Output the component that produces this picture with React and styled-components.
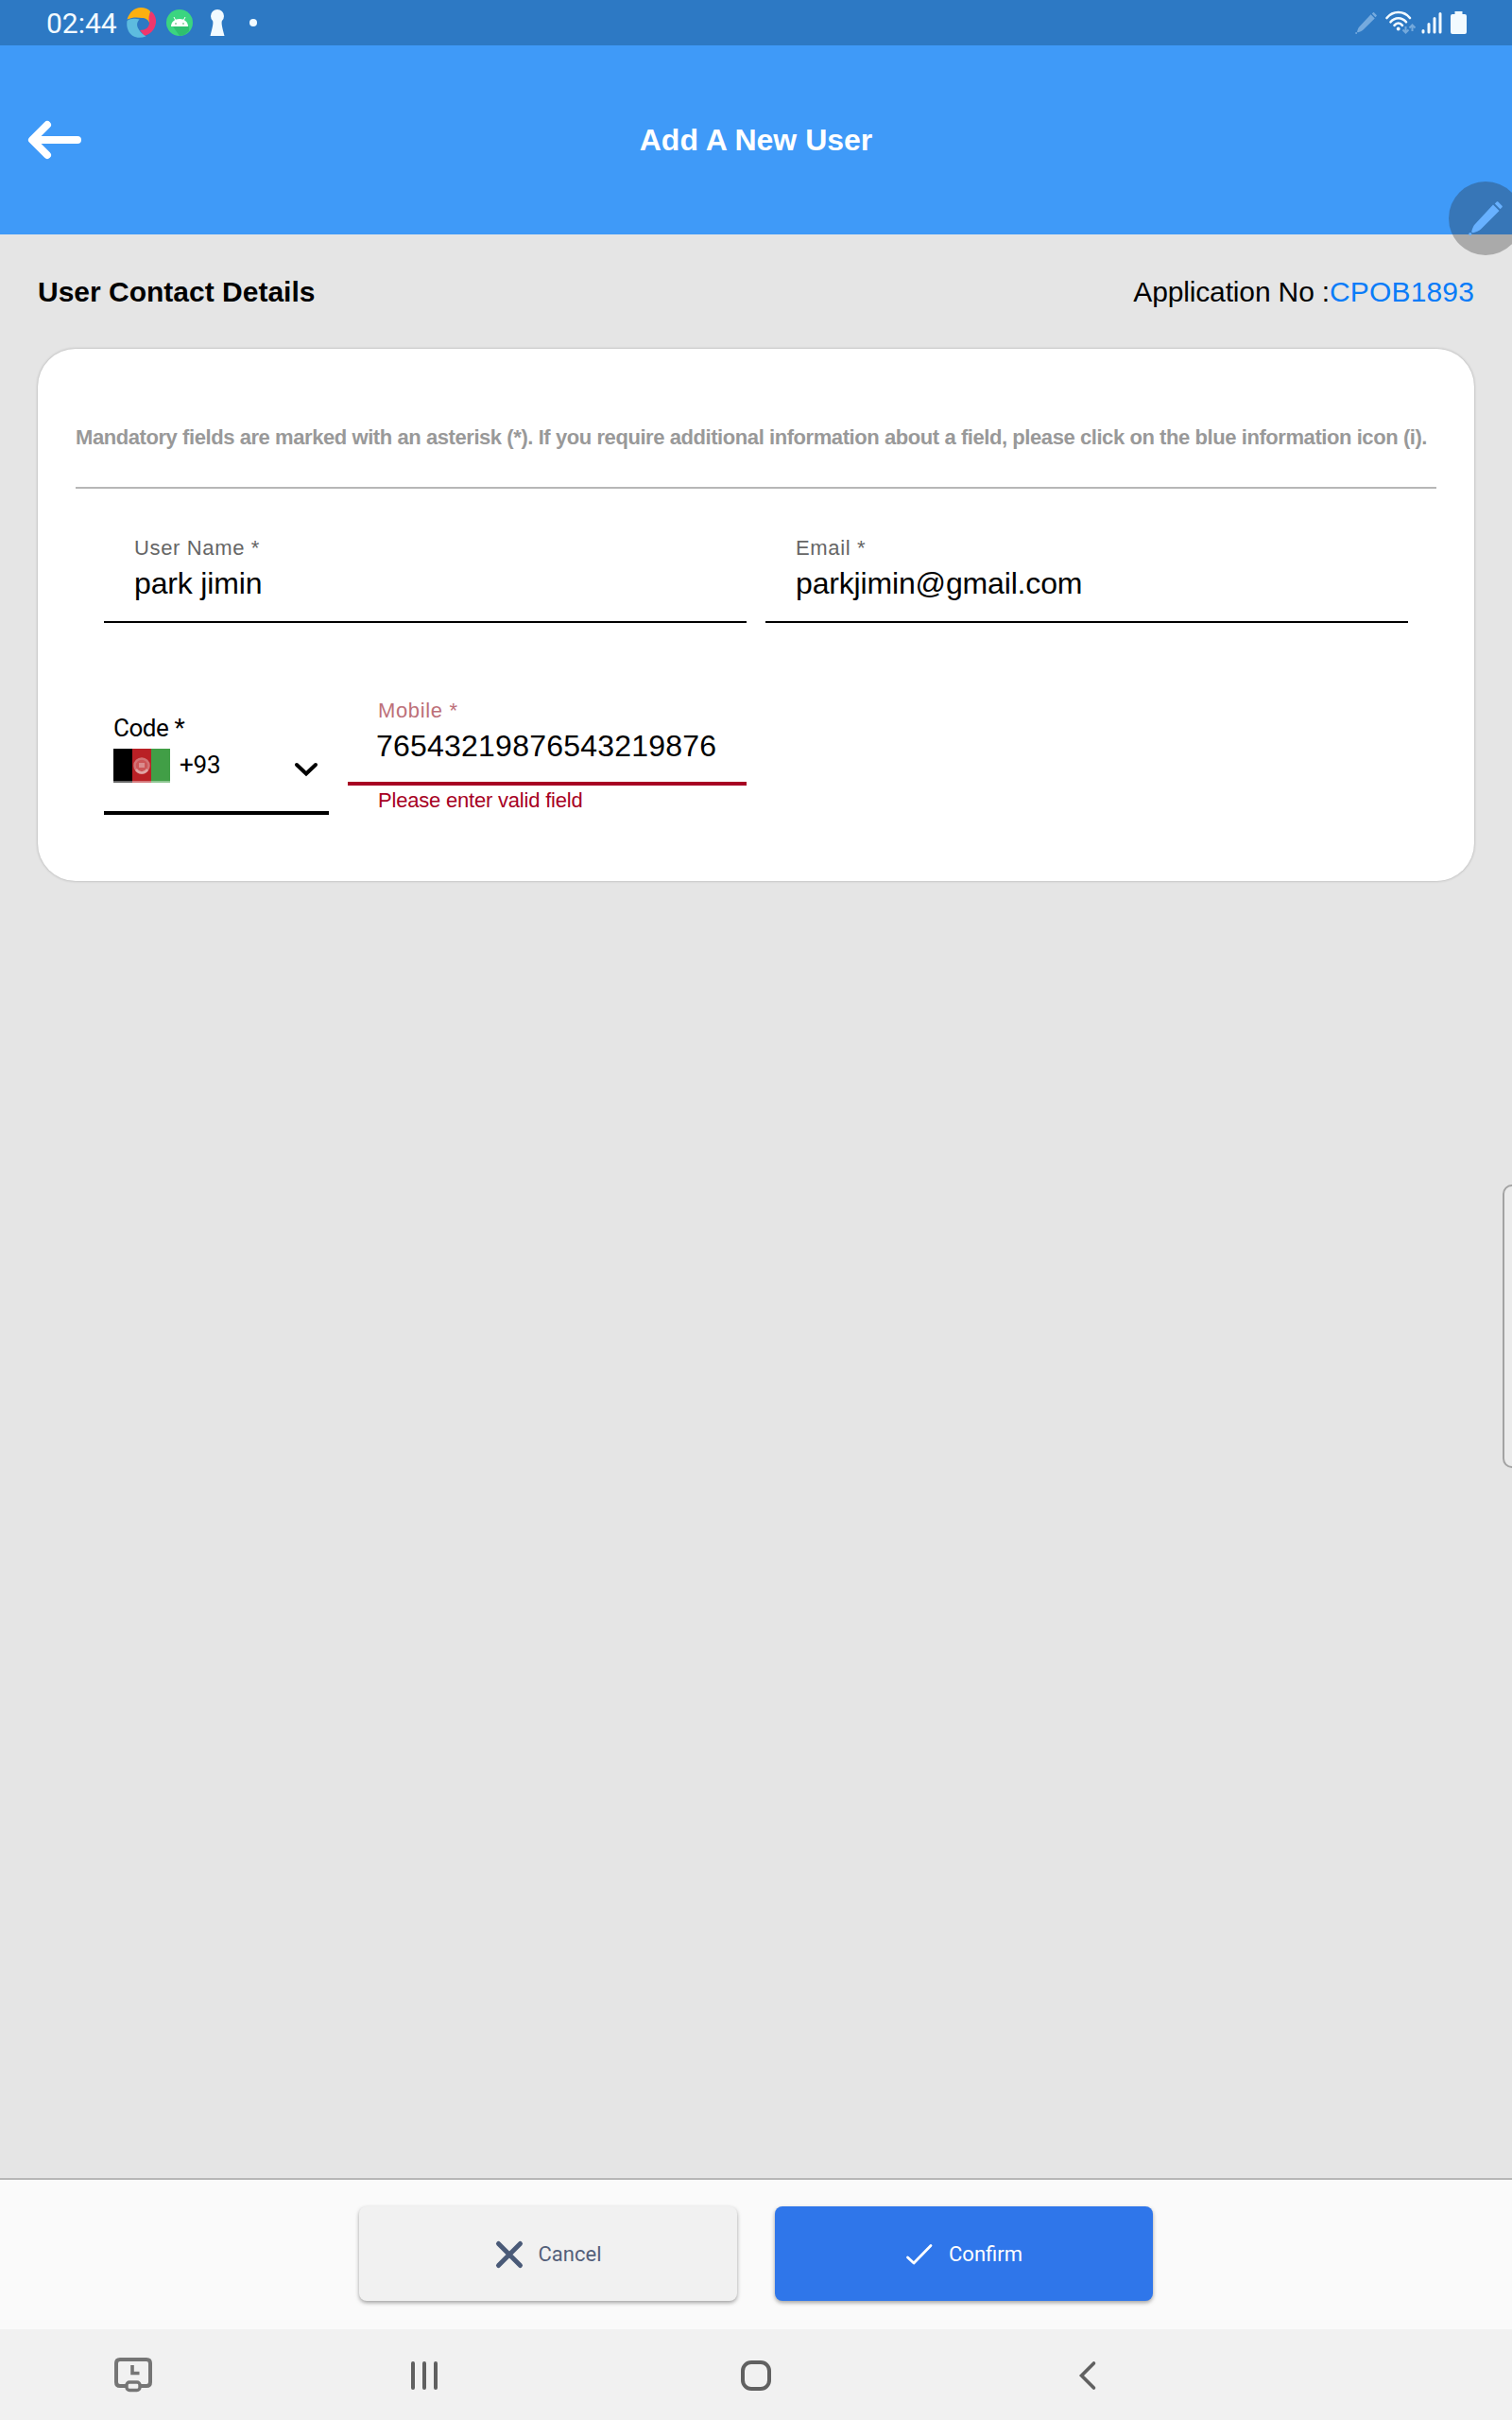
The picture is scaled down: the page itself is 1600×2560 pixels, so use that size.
import React from "react";
import styled, { createGlobalStyle } from "styled-components";

const GlobalStyle = createGlobalStyle`
  *, *::before, *::after { box-sizing: border-box; }
  body { margin: 0; font-family: "Liberation Sans", Arial, sans-serif; background: #e5e5e5; }
`;

const Screen = styled.div`
  position: relative;
  display: flex;
  flex-direction: column;
  width: 1600px;
  height: 2560px;
  overflow: hidden;
  background: #e5e5e5;
  color: #000;
`;

const StatusBar = styled.header`
  display: flex;
  align-items: center;
  justify-content: space-between;
  height: 48px;
  padding: 0 48px 0 49px;
  background: #2d79c4;
`;

const StatusGroup = styled.div`
  display: flex;
  align-items: center;
`;

const Clock = styled.span`
  width: 85px;
  padding-top: 1px;
  font: 400 30px/48px Roboto, sans-serif;
  color: #f2faff;
`;

const Icon = styled.svg`
  display: block;
  flex: none;
  overflow: visible;
  margin-left: ${(p) => p.$gap || 0}px;
`;

const TitleBar = styled.div`
  display: grid;
  grid-template-columns: 120px 1fr 120px;
  align-items: center;
  height: 200px;
  background: #3f9af8;
`;

const BackButton = styled.button`
  justify-self: start;
  margin: 0 0 0 30px;
  padding: 0;
  border: 0;
  background: none;
`;

const Title = styled.h1`
  margin: 0;
  font-size: 32px;
  line-height: 40px;
  text-align: center;
  color: #fff;
`;

const Main = styled.main`
  flex: 1;
  padding: 0 40px;
`;

const SectionHead = styled.div`
  display: flex;
  align-items: center;
  justify-content: space-between;
  height: 121px;
  font-size: 30px;
  line-height: 40px;
`;

const SectionTitle = styled.h2`
  margin: 0;
  font-size: inherit;
`;

const AppLabel = styled.span`
  letter-spacing: -0.15px;
`;

const AppNumber = styled.span`
  letter-spacing: 0.15px;
  color: #0a7cf8;
`;

const Card = styled.section`
  height: 563px;
  padding: 74px 40px 0;
  border-radius: 40px;
  background: #fff;
  box-shadow: 0 0 3px rgba(0, 0, 0, 0.28);
`;

const Hint = styled.p`
  margin: 0;
  height: 74px;
  border-bottom: 2px solid #b7b7b7;
  font-weight: 700;
  font-size: 22px;
  line-height: 40px;
  letter-spacing: -0.428px;
  white-space: nowrap;
  color: #999;
`;

const FieldGrid = styled.div`
  display: grid;
  grid-template-columns: 680px 680px;
  column-gap: 20px;
  row-gap: 73px;
  padding: 43px 30px 0;
`;

const MobileGroup = styled.div`
  display: grid;
  grid-template-columns: 238px 422px;
  column-gap: 20px;
`;

const Field = styled.label`
  display: block;
`;

const FieldBody = styled.span`
  display: flex;
  flex-direction: column;
  height: 99px;
  padding-left: 32px;
  border-bottom: ${(p) => (p.$error ? "4px solid #a70023" : "2px solid #000")};
`;

const FieldLabel = styled.span`
  padding-top: 1px;
  font-size: 22px;
  line-height: 37px;
  letter-spacing: 0.65px;
  color: ${(p) => (p.$error ? "#bd7079" : "#666")};
`;

const FieldValue = styled.span`
  font-size: 32px;
  line-height: 38px;
  letter-spacing: ${(p) => p.$spacing ?? -0.16}px;
  margin-left: ${(p) => p.$shift || 0}px;
`;

const FieldError = styled.span`
  display: block;
  padding-left: 32px;
  font-size: 22px;
  line-height: 31px;
  letter-spacing: -0.2px;
  color: #a70023;
`;

const CodeField = styled.div`
  height: 130px;
  padding: 23px 12px 0 10px;
  border-bottom: 4px solid #000;
  font: 400 26px/30px Roboto, sans-serif;
`;

const CodeLabel = styled.div`
  height: 37px;
  letter-spacing: -0.45px;
`;

const CodeSelect = styled.div`
  display: flex;
  align-items: center;
  height: 36px;
`;

const DialCode = styled.span`
  flex: 1;
  padding-left: 10px;
  margin-top: -2px;
  letter-spacing: -0.2px;
`;

const ActionBar = styled.footer`
  display: flex;
  justify-content: center;
  gap: 40px;
  height: 160px;
  padding-top: 28px;
  border-top: 2px solid #b7b7b7;
  background: #fafafa;
`;

const ActionButton = styled.button`
  display: flex;
  align-items: center;
  justify-content: center;
  gap: 17px;
  width: 400px;
  height: 100px;
  padding: 2px 0 0 1px;
  border: 0;
  border-radius: 8px;
  background: ${(p) => (p.$primary ? "#2f76ea" : "#f1f1f1")};
  color: ${(p) => (p.$primary ? "#fff" : "#54607a")};
  font: 400 22px/30px Roboto, sans-serif;
  box-shadow: 0 2px 4px rgba(0, 0, 0, 0.36);
`;

const NavBar = styled.nav`
  display: grid;
  grid-template-columns: 281px 336px 366px 336px 281px;
  align-items: center;
  justify-items: center;
  height: 96px;
  padding-top: 2px;
  background: #f1f1f1;
`;

const PenBubble = styled.div`
  position: absolute;
  top: 192px;
  left: 1533px;
  width: 78px;
  height: 78px;
  border-radius: 50%;
  background: rgba(38, 38, 38, 0.31);
`;

const EdgeHandle = styled.div`
  position: absolute;
  top: 1253px;
  right: -12px;
  width: 22px;
  height: 300px;
  border: 2px solid #a3a3a3;
  border-radius: 10px;
  background: #ebebeb;
`;

const BrandIcon = () => (
  <Icon width="32" height="32" viewBox="0 0 32 32">
    <path d="M.500 12.500C3 5 8 0 15 0c4 0 8 1.500 10 4-1 4 1 6-1 12-1-3-4-5-8-5-5-1-10-1-15.500 1.500z" fill="#fdb010" />
    <path d="M26 4c4 3 5.500 8 5 12-1 8-7 13-13 14-1-2-2-4-4-6 6 0 10-3 10-8-1-5-.500-9 2-12z" fill="#f0376c" />
    <path d="M.500 14c3-2.500 8-3 13-1.500-3 3-3 7-1 10 2 4 5 6 8 8C12 33.500 5 31 2 25c-2-4-2-8-1.500-11z" fill="#5dbcdf" />
  </Icon>
);

const AndroidIcon = () => (
  <Icon width="28" height="28" viewBox="0 0 28 28" $gap={10}>
    <circle cx="14" cy="14" r="14" fill="#3bd580" />
    <path d="M7 18h17v5l-5 4-5 1z" fill="#2fc06f" />
    <path d="M5 18c0-5 4-8 9-8s9 3 9 8z" fill="#fff" />
    <path d="M8 8l2 4M20 8l-2 4" stroke="#fff" strokeWidth="1" />
    <circle cx="10" cy="15" r=".8" fill="#3a5" />
    <circle cx="18" cy="15" r=".8" fill="#3a5" />
  </Icon>
);

const KeyholeIcon = () => (
  <Icon width="16" height="28" viewBox="0 0 16 28" $gap={18}>
    <circle cx="8" cy="7" r="7" fill="#f2faff" />
    <path d="M3 11h10c-1 4 0 7 2.500 17H.500C3 18 4 15 3 11z" fill="#f2faff" />
  </Icon>
);

const Pencil = ({ size, color, gap, x = 0, y = 0 }) => (
  <Icon width={size} height={size} viewBox="0 0 36 36" $gap={gap} x={x} y={y}>
    <g fill={color}>
      <path d="M26 3.500l6.500 6.500L13 29.500c-2 2-5 2.700-8 3.700-1.200.300-2-.700-1.700-1.700 1-3 1.700-5.500 3.700-7.500z" />
      <path d="M27.800 2.500l2-2c.500-.500 1-.500 1.500 0L35.500 4.700c.500.500.500 1 0 1.500l-2 2z" />
      <circle cx="1.800" cy="34.500" r="1.500" />
    </g>
  </Icon>
);

const WifiIcon = () => (
  <Icon width="32" height="24" viewBox="0 0 32 24" $gap={9}>
    <g fill="none" stroke="#f2faff" strokeWidth="2.600" strokeLinecap="round">
      <path d="M1.500 7C8-1 19.500-1 26 7" />
      <path d="M5.500 11.300C10 5.800 17.500 5.800 22 11.300" />
      <path d="M9.500 14.800c2.500-3 6-3 8.500 0" />
    </g>
    <circle cx="13.700" cy="18.500" r="1.900" fill="#f2faff" />
    <g fill="none" stroke="#74a9dc" strokeWidth="2">
      <path d="M21.500 16v6M18.500 19.500l3 3 3-3M28.500 21v-6M25.500 17.500l3-3 3 3" />
    </g>
  </Icon>
);

const SignalIcon = () => (
  <Icon width="22" height="24" viewBox="0 0 22 24" $gap={6}>
    <path d="M2 20.500V22M8 13.500V22M14 7.500V22M20 2.500V22" stroke="#f2faff" strokeWidth="3" strokeLinecap="round" />
  </Icon>
);

const BatteryIcon = () => (
  <Icon width="17" height="24" viewBox="0 0 17 24" $gap={9}>
    <path d="M4.500 0h8v3H15q2 0 2 2v17q0 2-2 2H2q-2 0-2-2V5q0-2 2-2h2.500z" fill="#f2faff" />
  </Icon>
);

const AfghanFlag = () => (
  <Icon width="60" height="36" viewBox="0 0 60 36">
    <path d="M0 0h20v36H0z" fill="#000" />
    <path d="M20 0h20v36H20z" fill="#b92025" />
    <path d="M40 0h20v36H40z" fill="#419e46" />
    <circle cx="30" cy="18" r="7.500" fill="#cc5557" stroke="#d27375" strokeWidth="2.500" />
    <path d="M27 15h6v5h-6z" fill="#d98c8d" />
    <path d="M24 22c3 4.500 9 4.500 12 0" fill="none" stroke="#e0a5a5" strokeWidth="2.500" />
    <path d="M0 34h60v2H0z" fill="#fff" opacity=".4" />
  </Icon>
);

const fields = [
  { label: "User Name *", value: "park jimin" },
  { label: "Email *", value: "parkjimin@gmail.com" },
];

export default function App() {
  return (
    <Screen>
      <GlobalStyle />
      <StatusBar>
        <StatusGroup>
          <Clock>02:44</Clock>
          <BrandIcon />
          <AndroidIcon />
          <KeyholeIcon />
          <Icon width="8" height="8" viewBox="0 0 8 8" $gap={26}>
            <circle cx="4" cy="4" r="4" fill="#f2faff" />
          </Icon>
        </StatusGroup>
        <StatusGroup>
          <Pencil size={23} color="#75aade" />
          <WifiIcon />
          <SignalIcon />
          <BatteryIcon />
        </StatusGroup>
      </StatusBar>

      <TitleBar>
        <BackButton aria-label="Back">
          <Icon width="56" height="40" viewBox="0 0 56 40">
            <path d="M20 4L4 20l16 16M5 20h47" fill="none" stroke="#fff" strokeWidth="8" strokeLinecap="round" strokeLinejoin="round" />
          </Icon>
        </BackButton>
        <Title>Add A New User</Title>
      </TitleBar>

      <Main>
        <SectionHead>
          <SectionTitle>User Contact Details</SectionTitle>
          <div>
            <AppLabel>Application No :</AppLabel>
            <AppNumber>CPOB1893</AppNumber>
          </div>
        </SectionHead>
        <Card>
          <Hint>
            Mandatory fields are marked with an asterisk (*). If you require additional information about a field, please click on the blue information icon (i).
          </Hint>
          <FieldGrid>
            {fields.map((f) => (
              <Field key={f.label}>
                <FieldBody>
                  <FieldLabel>{f.label}</FieldLabel>
                  <FieldValue>{f.value}</FieldValue>
                </FieldBody>
              </Field>
            ))}
            <MobileGroup>
              <CodeField>
                <CodeLabel>Code *</CodeLabel>
                <CodeSelect>
                  <AfghanFlag />
                  <DialCode>+93</DialCode>
                  <Icon width="24" height="14" viewBox="0 0 24 14">
                    <path d="M2 2l10 9.500L22 2" fill="none" stroke="#000" strokeWidth="4" strokeLinecap="round" transform="translate(0 4)" />
                  </Icon>
                </CodeSelect>
              </CodeField>
              <Field>
                <FieldBody $error>
                  <FieldLabel $error>Mobile *</FieldLabel>
                  <FieldValue $spacing={0.22} $shift={-2}>76543219876543219876</FieldValue>
                </FieldBody>
                <FieldError>Please enter valid field</FieldError>
              </Field>
            </MobileGroup>
          </FieldGrid>
        </Card>
      </Main>

      <ActionBar>
        <ActionButton>
          <Icon width="28" height="28" viewBox="0 0 28 28">
            <path d="M2.500 2.500l23 23M25.500 2.500l-23 23" stroke="#4a5a78" strokeWidth="5" strokeLinecap="round" />
          </Icon>
          Cancel
        </ActionButton>
        <ActionButton $primary>
          <Icon width="28" height="22" viewBox="0 0 28 22">
            <path d="M1.500 14l6.500 6L26 1.500" fill="none" stroke="#fff" strokeWidth="2.800" strokeLinecap="round" strokeLinejoin="round" />
          </Icon>
          Confirm
        </ActionButton>
      </ActionBar>

      <NavBar>
        <Icon width="40" height="36" viewBox="0 0 40 36">
          <g fill="none" stroke="#757575" strokeWidth="4">
            <path d="M13 29H6q-4 0-4-4V5q0-4 4-4h28q4 0 4 4v20q0 4-4 4h-7" />
            <rect x="13" y="25" width="14" height="8.500" rx="3" strokeWidth="3.400" />
            <path d="M19 7v8.500h7.500" strokeWidth="3.600" />
          </g>
        </Icon>
        <Icon width="28" height="30" viewBox="0 0 28 30">
          <path d="M2 2v26M14 2v26M26 2v26" stroke="#606060" strokeWidth="4" strokeLinecap="round" />
        </Icon>
        <Icon width="32" height="32" viewBox="0 0 32 32">
          <rect x="2" y="2" width="28" height="28" rx="9" fill="none" stroke="#606060" strokeWidth="4" />
        </Icon>
        <Icon width="18" height="30" viewBox="0 0 18 30">
          <path d="M15.500 2L2.500 15l13 13" fill="none" stroke="#606060" strokeWidth="3.600" strokeLinecap="round" />
        </Icon>
      </NavBar>

      <PenBubble>
        <Icon width="78" height="78" viewBox="0 0 78 78">
          <Pencil size={36} color="#68b1ff" x={21} y={21} />
        </Icon>
      </PenBubble>
      <EdgeHandle />
    </Screen>
  );
}
